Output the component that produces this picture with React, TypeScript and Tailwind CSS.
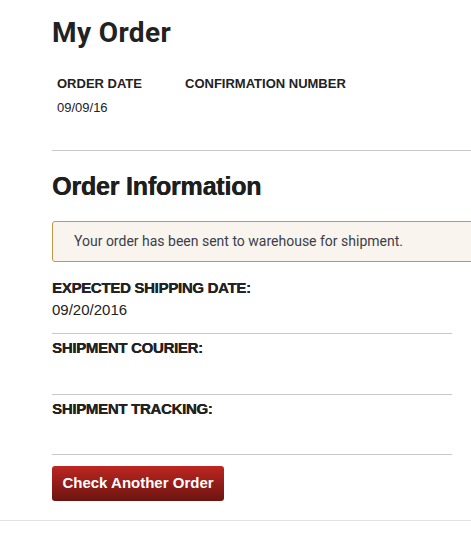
const rows = [
  { label: "EXPECTED SHIPPING DATE:", value: "09/20/2016" },
  { label: "SHIPMENT COURIER:", value: "" },
  { label: "SHIPMENT TRACKING:", value: "" },
];

const OrderStatus = () => {
  return (
    <div className="min-h-[538px] overflow-hidden bg-white font-['Liberation_Sans',Arial,sans-serif] text-[#222]">
      <div className="pl-[52px]">
        <h1 className="mt-[19px] h-[28px] font-['Roboto',sans-serif] text-[28px] leading-[28px] font-bold tracking-[0.4px] text-[#222]">
          My Order
        </h1>

        <div className="mt-[28.5px] flex pl-[5px] text-[13px] leading-[16px]">
          <div className="w-[128px]">
            <div className="font-bold">ORDER DATE</div>
            <div className="mt-[8px]">09/09/16</div>
          </div>
          <div>
            <div className="font-bold">CONFIRMATION NUMBER</div>
          </div>
        </div>

        <div className="mt-[34.5px] border-t border-[#c8c8c8]" />

        <h2 className="mt-[20px] text-[25px] leading-[30px] font-bold tracking-[-0.2px] text-[#1e1e1e] [text-shadow:0.5px_0_0_#1e1e1e]">
          Order Information
        </h2>

        <div className="mt-[20px] w-[440px] rounded-[3px] border border-[#c39a45] bg-[#f9f5ee] py-[11px] pl-[21px] font-['Roboto',sans-serif] text-[14px] leading-[17px] text-[#3b3d4a]">
          Your order has been sent to warehouse for shipment.
        </div>

        <div className="mt-[16.5px] w-[400px]">
          {rows.map((row, i) => (
            <div
              key={row.label}
              className={i === 0 ? "pb-[14px]" : "border-t border-[#c8c8c8] pt-[5px] pb-[14px]"}
            >
              <div className="text-[15px] leading-[18px] font-bold tracking-[-0.3px] text-[#222] [text-shadow:0.3px_0_0_#222]">
                {row.label}
              </div>
              <div className="mt-[4.5px] min-h-[18px] text-[15px] leading-[18px]">{row.value}</div>
            </div>
          ))}
          <div className="border-t border-[#c8c8c8]" />
        </div>

        <button
          type="button"
          className="mt-[11px] h-[35px] w-[172px] rounded-[3px] bg-linear-to-b from-[#be2621] to-[#6c1410] text-[15px] font-bold text-white"
        >
          Check Another Order
        </button>
      </div>

      <div className="mt-[19px] border-t border-[#e2e2e2]" />
    </div>
  );
};

export default function App() {
  return <OrderStatus />;
}
